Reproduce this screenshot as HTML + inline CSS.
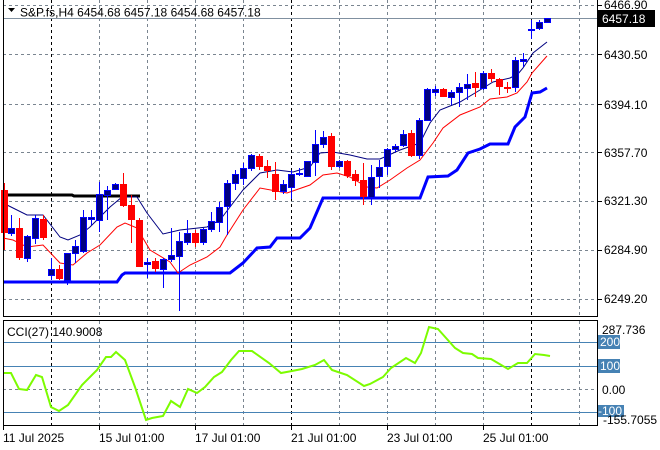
<!DOCTYPE html>
<html><head><meta charset="utf-8"><style>
body{margin:0;background:#fff;width:660px;height:450px;overflow:hidden}
svg{display:block}
text{font-family:"Liberation Sans",sans-serif;font-size:12px;fill:#000}
</style></head><body>
<svg width="660" height="450" viewBox="0 0 660 450" xmlns="http://www.w3.org/2000/svg">
<g stroke-dasharray="3,3" stroke-width="1" shape-rendering="crispEdges">
<g stroke="#7a8590">
<line x1="99.5" y1="0" x2="99.5" y2="316"/><line x1="147.5" y1="0" x2="147.5" y2="316"/><line x1="195.5" y1="0" x2="195.5" y2="316"/><line x1="243.5" y1="0" x2="243.5" y2="316"/><line x1="339.5" y1="0" x2="339.5" y2="316"/><line x1="387.5" y1="0" x2="387.5" y2="316"/><line x1="435.5" y1="0" x2="435.5" y2="316"/><line x1="483.5" y1="0" x2="483.5" y2="316"/><line x1="579.5" y1="0" x2="579.5" y2="316"/>
<line x1="99.5" y1="321" x2="99.5" y2="425"/><line x1="147.5" y1="321" x2="147.5" y2="425"/><line x1="195.5" y1="321" x2="195.5" y2="425"/><line x1="243.5" y1="321" x2="243.5" y2="425"/><line x1="339.5" y1="321" x2="339.5" y2="425"/><line x1="387.5" y1="321" x2="387.5" y2="425"/><line x1="435.5" y1="321" x2="435.5" y2="425"/><line x1="483.5" y1="321" x2="483.5" y2="425"/><line x1="579.5" y1="321" x2="579.5" y2="425"/>
<line x1="3" y1="5.5" x2="597" y2="5.5"/><line x1="3" y1="54.5" x2="597" y2="54.5"/><line x1="3" y1="104.5" x2="597" y2="104.5"/><line x1="3" y1="152.5" x2="597" y2="152.5"/><line x1="3" y1="201.5" x2="597" y2="201.5"/><line x1="3" y1="250.5" x2="597" y2="250.5"/><line x1="3" y1="299.5" x2="597" y2="299.5"/>
<line x1="3" y1="389.5" x2="597" y2="389.5"/>
</g>
<g stroke="#000">
<line x1="51.5" y1="0" x2="51.5" y2="316"/><line x1="291.5" y1="0" x2="291.5" y2="316"/><line x1="531.5" y1="0" x2="531.5" y2="316"/>
<line x1="51.5" y1="321" x2="51.5" y2="425"/><line x1="291.5" y1="321" x2="291.5" y2="425"/><line x1="531.5" y1="321" x2="531.5" y2="425"/>
</g></g>
<line x1="3" y1="18.5" x2="597" y2="18.5" stroke="#8090a0" shape-rendering="crispEdges"/>
<g stroke="#4682b4" shape-rendering="crispEdges">
<line x1="3" y1="342.5" x2="597" y2="342.5"/><line x1="3" y1="366.5" x2="597" y2="366.5"/><line x1="3" y1="412.5" x2="597" y2="412.5"/>
</g>
<polyline fill="none" stroke="#000" stroke-width="3" points="3,195 72,195 74,196 140,196"/>
<polyline fill="none" stroke="#0000ff" stroke-width="3" points="3,282 117,282 122,275 125,273 230,273 243,263 257,248 270,247 277,238 300,238 310,228 323,198 420,198 428,177 448,176 457,170 468,153 480,149 490,144 508,144 515,127 525,117 532,93 540,92 547,88"/>
<polyline fill="none" stroke="#ff0000" stroke-width="1" points="3,238 13,240 27,247 43,245 60,263 73,265 87,253 100,245 117,227 125,223 137,228 150,250 170,262 178,273 190,265 207,257 220,247 227,235 243,210 260,188 287,193 310,185 323,175 337,173 350,177 367,187 377,188 390,180 407,168 420,160 433,143 443,128 460,115 480,107 490,99 507,97 517,93 527,82 532,73 547,56"/>
<polyline fill="none" stroke="#000080" stroke-width="1" points="3,203 27,215 43,215 60,237 68,240 80,235 90,227 110,207 122,197 137,197 147,213 163,234 180,230 207,227 220,220 230,207 243,190 260,173 277,170 293,172 310,167 320,153 333,152 350,155 367,159 380,159 400,150 420,143 430,123 440,110 460,102 480,90 493,82 510,78 518,74 523,68 533,53 547,42"/>
<g stroke-width="1" shape-rendering="crispEdges">
<g stroke="#0000ff">
<line x1="11.5" y1="215" x2="11.5" y2="236"/><line x1="27.5" y1="235" x2="27.5" y2="262"/><line x1="35.5" y1="215" x2="35.5" y2="244"/><line x1="51.5" y1="258" x2="51.5" y2="280"/><line x1="67.5" y1="253" x2="67.5" y2="285"/><line x1="75.5" y1="240" x2="75.5" y2="263"/><line x1="83.5" y1="210" x2="83.5" y2="253"/><line x1="91.5" y1="210" x2="91.5" y2="225"/><line x1="99.5" y1="182" x2="99.5" y2="232"/><line x1="107.5" y1="186" x2="107.5" y2="220"/><line x1="115.5" y1="183" x2="115.5" y2="190"/><line x1="147.5" y1="258" x2="147.5" y2="278"/><line x1="163.5" y1="258" x2="163.5" y2="288"/><line x1="171.5" y1="228" x2="171.5" y2="262"/><line x1="179.5" y1="232" x2="179.5" y2="311"/><line x1="187.5" y1="220" x2="187.5" y2="245"/><line x1="203.5" y1="228" x2="203.5" y2="245"/><line x1="211.5" y1="212" x2="211.5" y2="232"/><line x1="219.5" y1="202" x2="219.5" y2="232"/><line x1="227.5" y1="180" x2="227.5" y2="235"/><line x1="235.5" y1="170" x2="235.5" y2="190"/><line x1="243.5" y1="163" x2="243.5" y2="185"/><line x1="251.5" y1="154" x2="251.5" y2="171"/><line x1="283.5" y1="180" x2="283.5" y2="194"/><line x1="291.5" y1="170" x2="291.5" y2="199"/><line x1="299.5" y1="168" x2="299.5" y2="176"/><line x1="307.5" y1="161" x2="307.5" y2="177"/><line x1="315.5" y1="130" x2="315.5" y2="176"/><line x1="323.5" y1="131" x2="323.5" y2="148"/><line x1="339.5" y1="160" x2="339.5" y2="168"/><line x1="371.5" y1="165" x2="371.5" y2="205"/><line x1="379.5" y1="160" x2="379.5" y2="188"/><line x1="387.5" y1="148" x2="387.5" y2="175"/><line x1="395.5" y1="144" x2="395.5" y2="152"/><line x1="403.5" y1="130" x2="403.5" y2="147"/><line x1="419.5" y1="118" x2="419.5" y2="159"/><line x1="427.5" y1="88" x2="427.5" y2="121"/><line x1="435.5" y1="86" x2="435.5" y2="96"/><line x1="451.5" y1="90" x2="451.5" y2="105"/><line x1="459.5" y1="83" x2="459.5" y2="107"/><line x1="467.5" y1="74" x2="467.5" y2="100"/><line x1="483.5" y1="71" x2="483.5" y2="90"/><line x1="515.5" y1="57" x2="515.5" y2="92"/><line x1="523.5" y1="53" x2="523.5" y2="67"/><line x1="531.5" y1="20" x2="531.5" y2="39"/><line x1="539.5" y1="20" x2="539.5" y2="30"/><line x1="547.5" y1="18" x2="547.5" y2="23"/>
</g>
<g fill="#000080" stroke="#0000ff">
<rect x="8.5" y="228.5" width="6" height="5"/><rect x="24.5" y="236.5" width="6" height="22"/><rect x="32.5" y="218.5" width="6" height="20"/><rect x="48.5" y="269.5" width="6" height="6"/><rect x="64.5" y="253.5" width="6" height="27"/><rect x="72.5" y="246.5" width="6" height="7"/><rect x="80.5" y="217.5" width="6" height="34"/><rect x="88.5" y="217.5" width="6" height="2"/><rect x="96.5" y="194.5" width="6" height="26"/><rect x="104.5" y="190.5" width="6" height="5"/><rect x="112.5" y="184.5" width="6" height="5"/><rect x="144.5" y="262.5" width="6" height="2"/><rect x="160.5" y="259.5" width="6" height="10"/><rect x="168.5" y="255.5" width="6" height="4"/><rect x="176.5" y="241.5" width="6" height="15"/><rect x="184.5" y="233.5" width="6" height="9"/><rect x="200.5" y="229.5" width="6" height="13"/><rect x="208.5" y="221.5" width="6" height="8"/><rect x="216.5" y="207.5" width="6" height="15"/><rect x="224.5" y="183.5" width="6" height="23"/><rect x="232.5" y="174.5" width="6" height="9"/><rect x="240.5" y="168.5" width="6" height="10"/><rect x="248.5" y="155.5" width="6" height="13"/><rect x="280.5" y="184.5" width="6" height="7"/><rect x="288.5" y="174.5" width="6" height="13"/><rect x="296.5" y="173.5" width="6" height="1"/><rect x="304.5" y="161.5" width="6" height="15"/><rect x="312.5" y="144.5" width="6" height="18"/><rect x="320.5" y="137.5" width="6" height="7"/><rect x="336.5" y="161.5" width="6" height="5"/><rect x="368.5" y="177.5" width="6" height="20"/><rect x="376.5" y="167.5" width="6" height="9"/><rect x="384.5" y="149.5" width="6" height="17"/><rect x="392.5" y="146.5" width="6" height="3"/><rect x="400.5" y="134.5" width="6" height="11"/><rect x="416.5" y="120.5" width="6" height="35"/><rect x="424.5" y="89.5" width="6" height="31"/><rect x="432.5" y="89.5" width="6" height="3"/><rect x="448.5" y="92.5" width="6" height="5"/><rect x="456.5" y="87.5" width="6" height="5"/><rect x="464.5" y="84.5" width="6" height="4"/><rect x="480.5" y="73.5" width="6" height="15"/><rect x="512.5" y="60.5" width="6" height="27"/><rect x="520.5" y="59.5" width="6" height="2"/><rect x="528.5" y="29.5" width="6" height="1"/><rect x="536.5" y="22.5" width="6" height="6"/><rect x="544.5" y="18.5" width="6" height="4"/>
</g>
<g stroke="#ff0000">
<line x1="4.5" y1="183" x2="4.5" y2="250"/><line x1="19.5" y1="218" x2="19.5" y2="260"/><line x1="43.5" y1="215" x2="43.5" y2="240"/><line x1="59.5" y1="265" x2="59.5" y2="280"/><line x1="123.5" y1="173" x2="123.5" y2="207"/><line x1="131.5" y1="195" x2="131.5" y2="243"/><line x1="139.5" y1="218" x2="139.5" y2="267"/><line x1="155.5" y1="258" x2="155.5" y2="272"/><line x1="195.5" y1="230" x2="195.5" y2="247"/><line x1="259.5" y1="154" x2="259.5" y2="170"/><line x1="267.5" y1="160" x2="267.5" y2="178"/><line x1="275.5" y1="162" x2="275.5" y2="200"/><line x1="331.5" y1="133" x2="331.5" y2="170"/><line x1="347.5" y1="160" x2="347.5" y2="178"/><line x1="355.5" y1="170" x2="355.5" y2="186"/><line x1="363.5" y1="163" x2="363.5" y2="205"/><line x1="411.5" y1="130" x2="411.5" y2="157"/><line x1="443.5" y1="88" x2="443.5" y2="97"/><line x1="475.5" y1="72" x2="475.5" y2="97"/><line x1="491.5" y1="69" x2="491.5" y2="82"/><line x1="499.5" y1="78" x2="499.5" y2="95"/><line x1="507.5" y1="82" x2="507.5" y2="93"/>
</g>
<g fill="#ff0000">
<rect x="1" y="190" width="7" height="43"/><rect x="16" y="228" width="7" height="30"/><rect x="40" y="219" width="7" height="19"/><rect x="56" y="269" width="7" height="10"/><rect x="120" y="184" width="7" height="22"/><rect x="128" y="205" width="7" height="15"/><rect x="136" y="220" width="7" height="47"/><rect x="152" y="261" width="7" height="8"/><rect x="192" y="233" width="7" height="10"/><rect x="256" y="156" width="7" height="11"/><rect x="264" y="166" width="7" height="5"/><rect x="272" y="174" width="7" height="18"/><rect x="328" y="136" width="7" height="31"/><rect x="344" y="161" width="7" height="15"/><rect x="352" y="174" width="7" height="7"/><rect x="360" y="180" width="7" height="17"/><rect x="408" y="133" width="7" height="23"/><rect x="440" y="89" width="7" height="8"/><rect x="472" y="83" width="7" height="5"/><rect x="488" y="73" width="7" height="6"/><rect x="496" y="79" width="7" height="8"/><rect x="504" y="87" width="7" height="2"/>
</g>
</g>
<polyline fill="none" stroke="#7cfc00" stroke-width="2" points="3,373 11,373 19,389 27,390 36,375 42,377 51,407 59,411 68,405 82,385 97,370 106,357 111,357 116,352 125,360 135,387 146,420 152,418 163,416 171,401 180,407 188,389 197,393 205,387 214,377 222,372 231,360 239,351 252,351 269,363 281,373 292,371 302,369 315,365 324,360 332,370 347,375 364,386 370,384 383,377 391,368 406,358 415,363 421,353 429,327 438,329 455,348 463,353 472,354 478,358 491,359 508,369 518,363 527,363 535,354 544,355 550,356"/>
<g stroke="#000" fill="none" shape-rendering="crispEdges">
<line x1="3.5" y1="0" x2="3.5" y2="316"/><line x1="597.5" y1="0" x2="597.5" y2="316"/><line x1="3" y1="316.5" x2="598" y2="316.5"/>
<line x1="3" y1="320.5" x2="598" y2="320.5"/><line x1="3.5" y1="320" x2="3.5" y2="425"/><line x1="597.5" y1="320" x2="597.5" y2="425"/><line x1="3" y1="425.5" x2="598" y2="425.5"/>
<line x1="598" y1="5.5" x2="602" y2="5.5"/><line x1="598" y1="54.5" x2="602" y2="54.5"/><line x1="598" y1="104.5" x2="602" y2="104.5"/><line x1="598" y1="152.5" x2="602" y2="152.5"/><line x1="598" y1="201.5" x2="602" y2="201.5"/><line x1="598" y1="250.5" x2="602" y2="250.5"/><line x1="598" y1="299.5" x2="602" y2="299.5"/>
<line x1="3.5" y1="426" x2="3.5" y2="430"/><line x1="99.5" y1="426" x2="99.5" y2="430"/><line x1="195.5" y1="426" x2="195.5" y2="430"/><line x1="291.5" y1="426" x2="291.5" y2="430"/><line x1="387.5" y1="426" x2="387.5" y2="430"/><line x1="483.5" y1="426" x2="483.5" y2="430"/>
</g>
<path d="M8 8 L15 8 L11.5 12 Z" fill="#000"/>
<text x="20" y="16.5">S&amp;P.fs,H4  6454.68 6457.18 6454.68 6457.18</text>
<text x="7" y="336">CCI(27) 140.9008</text>
<text x="604" y="9">6466.90</text>
<rect x="598" y="10" width="57" height="17" fill="#000"/>
<text x="602" y="23" style="fill:#fff">6457.18</text>
<text x="604" y="59">6430.50</text>
<text x="604" y="109">6394.10</text>
<text x="604" y="157">6357.70</text>
<text x="604" y="205">6321.30</text>
<text x="604" y="254">6284.90</text>
<text x="604" y="303">6249.20</text>
<text x="602" y="334">287.736</text>
<rect x="598" y="335" width="22" height="14" fill="#4682b4"/>
<text x="600" y="346" style="fill:#fff">200</text>
<rect x="598" y="359" width="22" height="14" fill="#4682b4"/>
<text x="600" y="370" style="fill:#fff">100</text>
<text x="602" y="394">0.00</text>
<rect x="598" y="405" width="26" height="12" fill="#4682b4"/>
<text x="598" y="415" style="fill:#fff">-100</text>
<text x="603" y="424">-155.7055</text>
<text x="3" y="442">11 Jul 2025</text>
<text x="99" y="442">15 Jul 01:00</text>
<text x="195" y="442">17 Jul 01:00</text>
<text x="291" y="442">21 Jul 01:00</text>
<text x="387" y="442">23 Jul 01:00</text>
<text x="483" y="442">25 Jul 01:00</text>
</svg>
</body></html>
